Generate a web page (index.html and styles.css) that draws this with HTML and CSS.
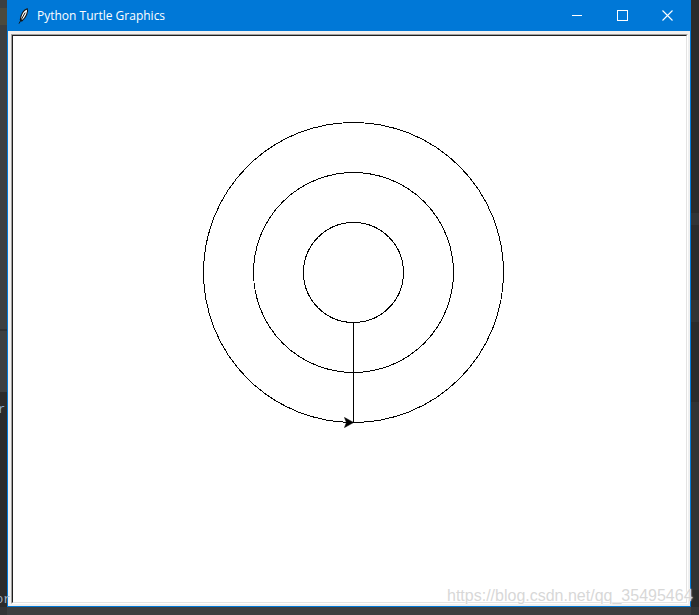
FILE: index.html
```html
<!DOCTYPE html>
<html>
<head>
<meta charset="utf-8">
<link rel="stylesheet" href="styles.css">
</head>
<body>
<div class="desktop">
  <div class="window">
    <div class="titlebar">
      <svg class="app-icon" width="11" height="16" viewBox="0 0 11 16">
        <path d="M9.2 0.7 C10.6 3.4 8.2 9.4 3.8 13 L2.3 11.8 C2.9 7 5.6 2.1 9.2 0.7 Z" fill="#ffffff" stroke="#111111" stroke-width="1.1"/>
        <path d="M1 15.6 L7.2 4.6" stroke="#111111" stroke-width="1" fill="none"/>
      </svg>
      <span class="title">Python Turtle Graphics</span>
      <div class="controls">
        <div class="ctrl">
          <svg width="11" height="11" viewBox="0 0 11 11"><path d="M0 5.5 H10" stroke="#fff" stroke-width="1"/></svg>
        </div>
        <div class="ctrl">
          <svg width="11" height="11" viewBox="0 0 11 11"><rect x="0.5" y="0.5" width="10" height="10" fill="none" stroke="#fff" stroke-width="1"/></svg>
        </div>
        <div class="ctrl">
          <svg width="11" height="11" viewBox="0 0 11 11"><path d="M0.5 0.5 L10.5 10.5 M10.5 0.5 L0.5 10.5" stroke="#fff" stroke-width="1.1"/></svg>
        </div>
      </div>
    </div>
    <div class="frame">
      <div class="canvas">
        <div class="canvas-inner">
          <svg class="drawing" width="673" height="566" viewBox="0 0 673 566" shape-rendering="crispEdges">
            <g fill="none" stroke="#000" stroke-width="1">
              <circle cx="340.5" cy="236.5" r="50"/>
              <circle cx="340.5" cy="236.5" r="100"/>
              <circle cx="340.5" cy="236.5" r="150"/>
              <path d="M340.5 286 V386"/>
            </g>
            <polygon points="340.5,386.5 331.5,381.5 333.5,386.5 331.5,391.5" fill="#000" stroke="#000" stroke-width="0.6" shape-rendering="auto"/>
          </svg>
        </div>
      </div>
    </div>
  </div>
</div>
<span class="edge-text edge-left-1">r</span>
<span class="edge-text edge-left-2">or</span>
<div class="watermark">https://blog.csdn.net/qq_35495464</div>
</body>
</html>
```
FILE: styles.css
```css
html, body {
  margin: 0;
  padding: 0;
}
body {
  width: 699px;
  height: 615px;
  overflow: hidden;
  position: relative;
  background-color: #3c3f41;
  background-image:
    linear-gradient(to bottom, #3c3f41 0 8px, #4b4a3e 8px 25px, #3c3f41 25px 329px, #2f3133 329px 331px, #3c3f41 331px 392px, #2b2b2b 392px 607px, #333537 607px),
    linear-gradient(to bottom, #2b2b2b 0 30px, #2b2b2b 30px 213px, #323436 213px 225px, #2b2b2b 225px 300px, #313335 300px 322px, #2b2b2b 322px 402px, #313335 402px 590px, #2b2b2b 590px 607px, #333537 607px);
  background-repeat: no-repeat;
  background-size: 7px 100%, 8px 100%;
  background-position: left top, right top;
  font-family: "Liberation Sans", Arial, sans-serif;
}
.desktop {
  display: flex;
  padding-left: 7px;
  height: 615px;
}
.window {
  width: 682px;
  height: 606px;
  border: 1px solid #0078d7;
  border-top: 0;
  display: flex;
  flex-direction: column;
  background: #f0f0f0;
}
.titlebar {
  height: 31px;
  background: #0078d7;
  display: flex;
  align-items: center;
  flex: none;
}
.app-icon {
  margin-left: 10px;
  flex: none;
}
.title {
  margin-left: 8px;
  color: #ffffff;
  font-family: "Open Sans", "Noto Sans", sans-serif;
  font-size: 12px;
  flex: 1;
}
.controls {
  display: flex;
  height: 31px;
}
.ctrl {
  width: 45px;
  height: 31px;
  display: flex;
  align-items: center;
  justify-content: center;
}
.frame {
  flex: 1;
  display: flex;
  padding: 3px 2px 2px 3px;
  background: #f0f0f0;
}
.canvas {
  flex: 1;
  display: flex;
  border: 1px solid;
  border-color: #a0a0a0 #ffffff #ffffff #a0a0a0;
}
.canvas-inner {
  flex: 1;
  display: flex;
  border: 1px solid;
  border-color: #1e1e1e #e3e3e3 #e3e3e3 #1e1e1e;
  background: #ffffff;
  overflow: hidden;
}
.drawing {
  display: block;
}
.watermark {
  position: absolute;
  left: 447px;
  top: 588px;
  font-family: "Liberation Sans", Arial, sans-serif;
  font-size: 16px;
  line-height: 16px;
  color: rgba(205, 205, 205, 0.8);
  text-shadow: 0 0 2px #ffffff, 0 0 1px #ffffff;
  white-space: nowrap;
}
.edge-text {
  position: absolute;
  font-family: "Liberation Mono", monospace;
  font-size: 12px;
  line-height: 12px;
  color: #a9b7c6;
}
.edge-left-1 {
  left: -2px;
  top: 404px;
  color: #8fb0d6;
}
.edge-left-2 {
  left: -4px;
  top: 594px;
  color: #a9b7c6;
}
```
